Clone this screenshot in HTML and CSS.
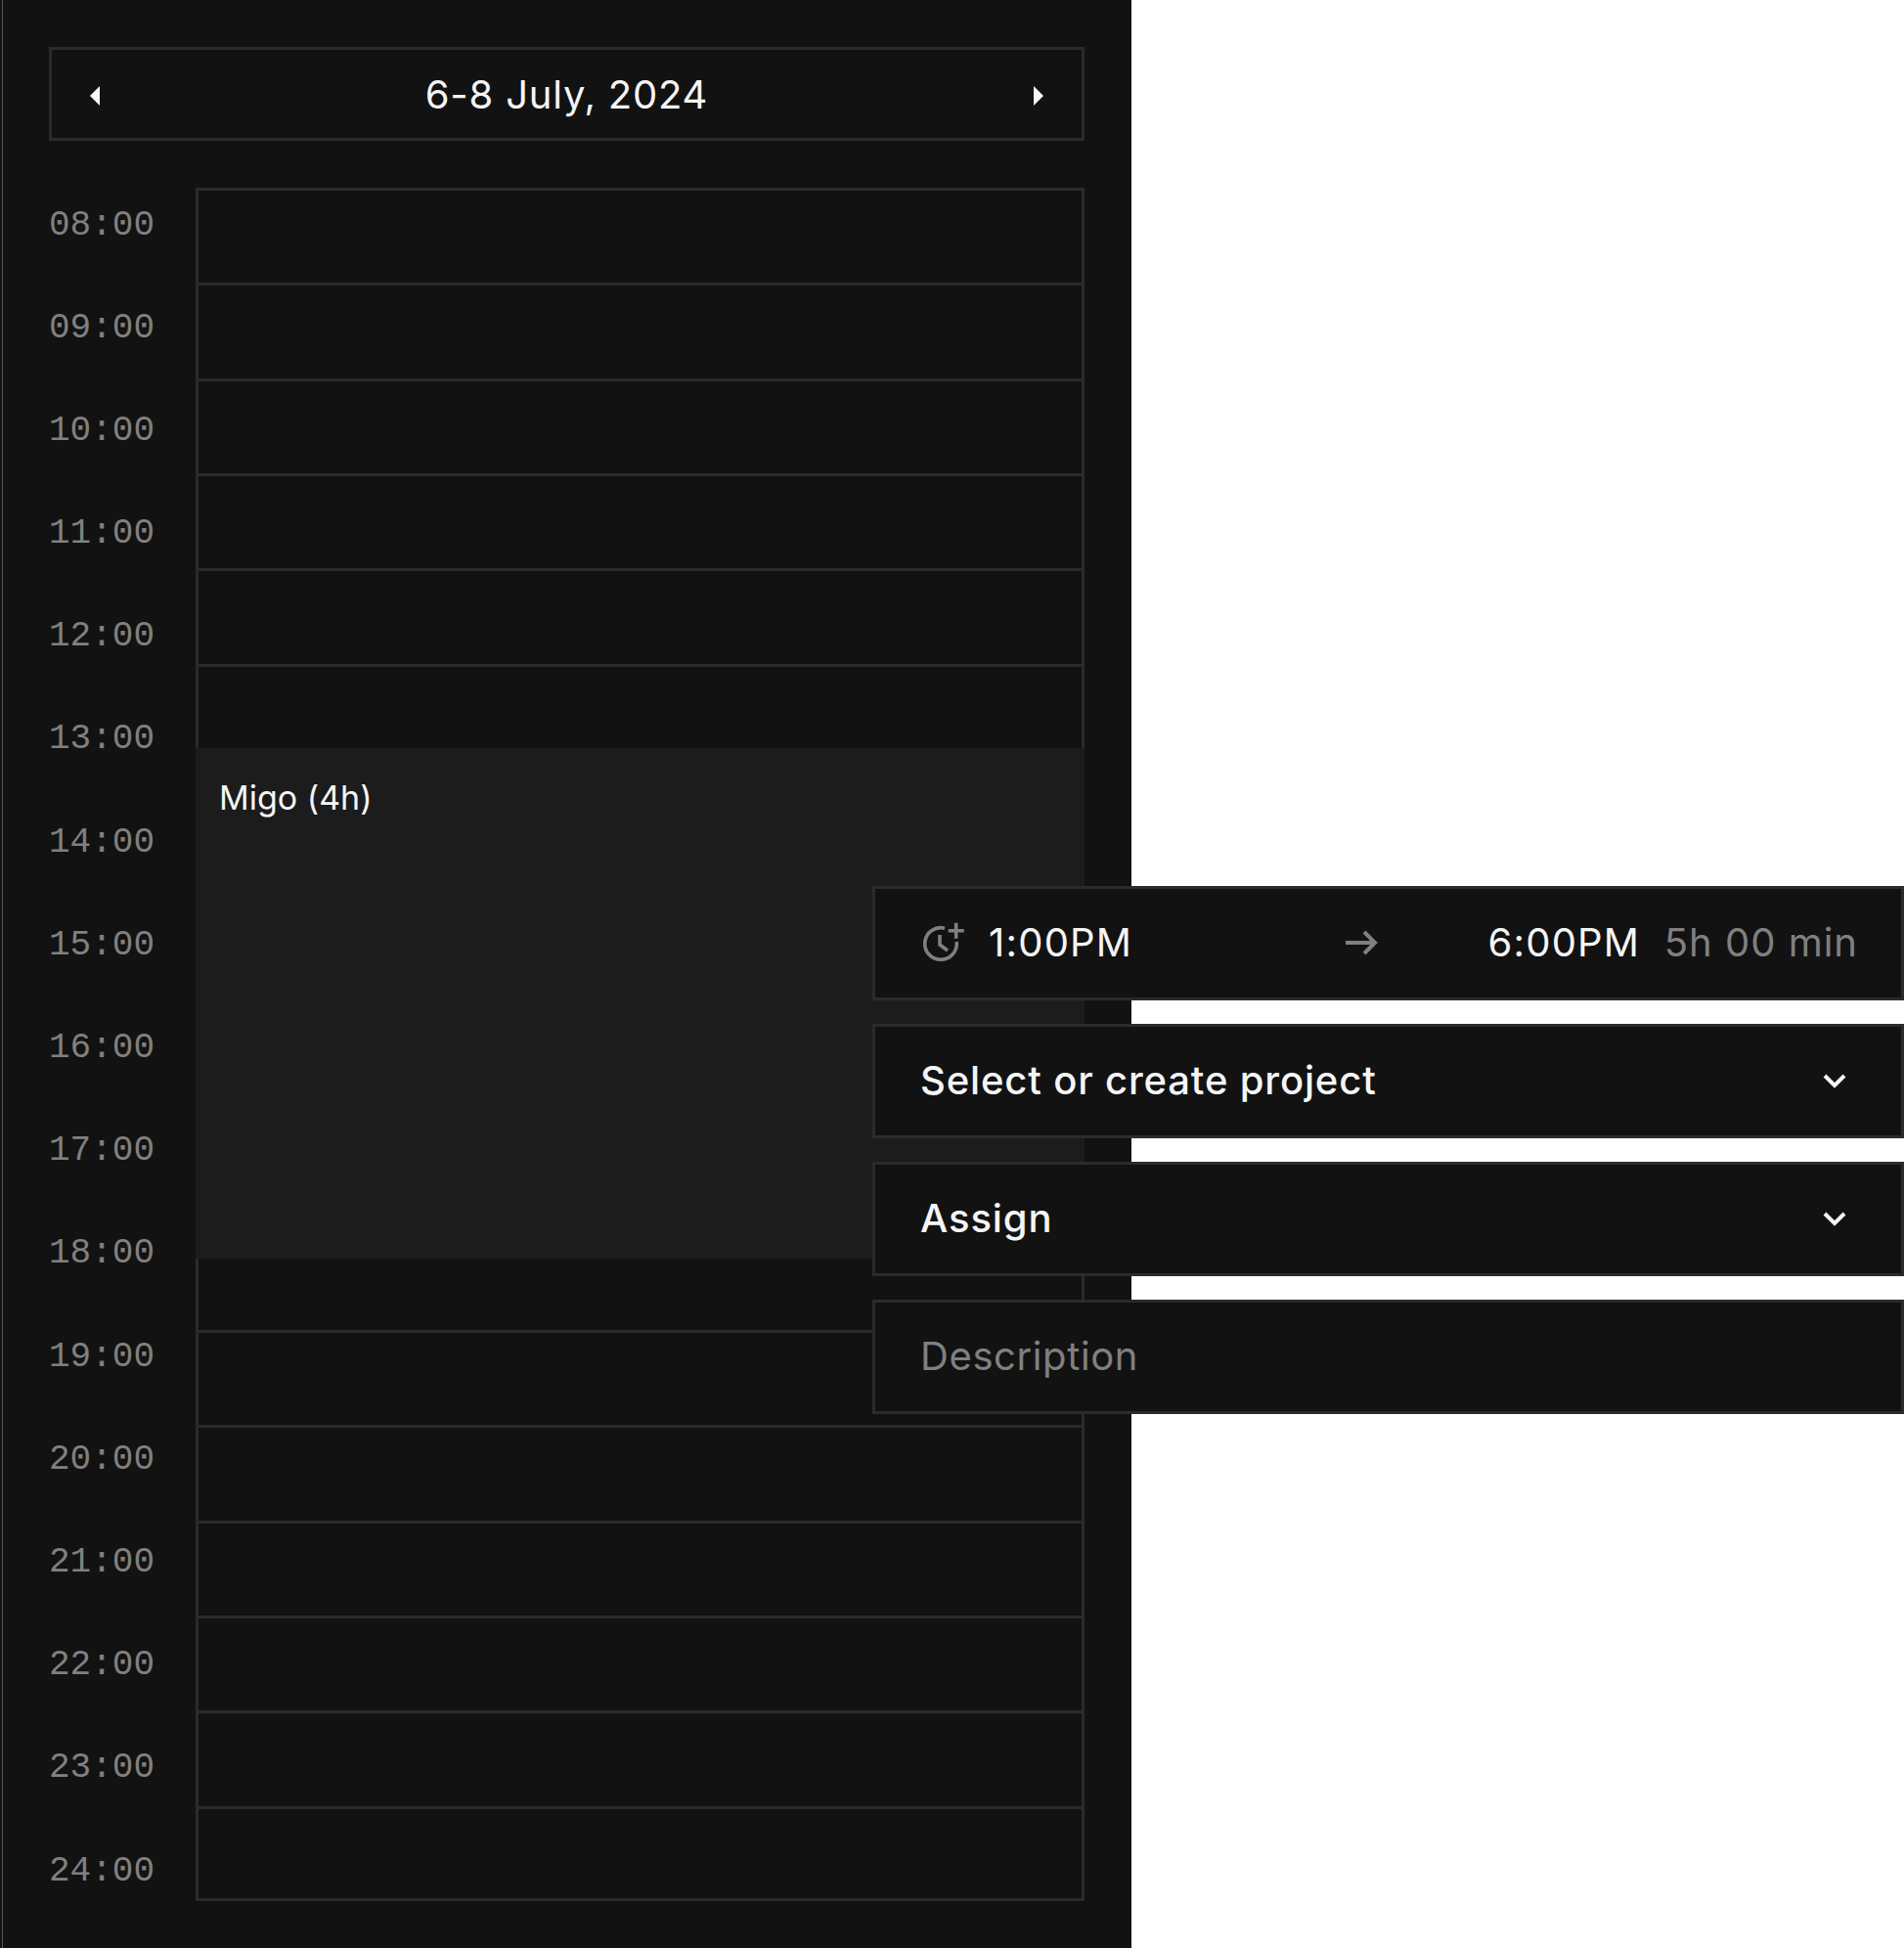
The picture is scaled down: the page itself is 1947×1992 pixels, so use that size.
FILE: index.html
```html
<!DOCTYPE html>
<html lang="en">
<head>
<meta charset="utf-8">
<title>Calendar</title>
<link rel="stylesheet" href="styles.css">
</head>
<body>
<div class="frame">
<main class="panel">
  <header class="datebar">
    <svg class="tri" width="12" height="20" viewBox="0 0 12 20"><path d="M11 0V20L1 10Z" fill="#f5f5f5"/></svg>
    <h1 class="datebar-title">6-8 July, 2024</h1>
    <svg class="tri" width="12" height="20" viewBox="0 0 12 20"><path d="M1 0V20L11 10Z" fill="#f5f5f5"/></svg>
  </header>
  <section class="schedule">
    <div class="hours">
      <span>08:00</span><span>09:00</span><span>10:00</span><span>11:00</span><span>12:00</span><span>13:00</span><span>14:00</span><span>15:00</span><span>16:00</span><span>17:00</span><span>18:00</span><span>19:00</span><span>20:00</span><span>21:00</span><span>22:00</span><span>23:00</span><span>24:00</span>
    </div>
    <div class="grid">
      <div class="slot"></div><div class="slot"></div><div class="slot"></div><div class="slot"></div><div class="slot"></div><div class="slot"></div><div class="slot"></div><div class="slot"></div><div class="slot"></div><div class="slot"></div><div class="slot"></div><div class="slot"></div><div class="slot"></div><div class="slot"></div><div class="slot"></div><div class="slot"></div><div class="slot"></div><div class="slot slot-last"></div>
      <div class="event">Migo (4h)</div>
    </div>
  </section>
</main>
</div>
<form class="entry">
  <div class="field">
    <svg class="clock" width="44" height="42" viewBox="0 0 44 42" fill="none" stroke="#808080" stroke-width="3.6"><path d="M22 6.2A16.3 16.3 0 1 0 34.2 20"/><path d="M17 13V23L25 29"/><path d="M33.7 .7V16.7M25.7 8.7H41.7"/></svg>
    <span class="time">1:00PM</span>
    <svg class="arrow" width="34" height="28" viewBox="0 0 34 28" fill="none" stroke="#808080" stroke-width="4"><path d="M0 14H30M19 3L30 14L19 25"/></svg>
    <span class="time time-end">6:00PM</span>
    <span class="muted muted-duration">5h 00 min</span>
  </div>
  <div class="field field-select">
    <span class="label">Select or create project</span>
    <svg class="chev" width="24" height="16" viewBox="0 0 24 16" fill="none" stroke="#f5f5f5" stroke-width="4"><path d="M2 3L12 13L22 3"/></svg>
  </div>
  <div class="field field-select">
    <span class="label">Assign</span>
    <svg class="chev" width="24" height="16" viewBox="0 0 24 16" fill="none" stroke="#f5f5f5" stroke-width="4"><path d="M2 3L12 13L22 3"/></svg>
  </div>
  <div class="field">
    <span class="muted muted-placeholder">Description</span>
  </div>
</form>
</body>
</html>
```
FILE: styles.css
```css
* { box-sizing: border-box; }
html, body { margin: 0; background: #fff; }
body {
  position: relative;
  width: 1947px;
  height: 1992px;
  overflow: hidden;
  font-family: Inter, "Liberation Sans", sans-serif;
  color: #f5f5f5;
}
.frame {
  width: 1157px;
  height: 1992px;
  padding-left: 2px;
  background: #121212;
}
.panel {
  height: 100%;
  border-left: 1px solid #5a5a5a;
  padding: 48px 48px 0 47px;
}
.datebar {
  height: 96px;
  border: 3px solid #2b2b2b;
  display: flex;
  align-items: center;
  justify-content: space-between;
  padding: 0 38px;
}
.tri { margin-top: 3px; }
.datebar-title {
  margin: 0;
  font-size: 40px;
  font-weight: 400;
  letter-spacing: .8px;
}
.schedule {
  display: flex;
  margin-top: 48px;
}
.hours {
  width: 150px;
  padding-top: 17.5px;
  display: flex;
  flex-direction: column;
  gap: 63.2px;
  font-family: "Liberation Mono", monospace;
  font-size: 36px;
  line-height: 42px;
  color: #808080;
}
.grid {
  position: relative;
  width: 909px;
  border-top: 3px solid #2b2b2b;
  border-left: 3px solid #2b2b2b;
  border-right: 3px solid #2b2b2b;
}
.slot {
  height: 97.33px;
  border-bottom: 3px solid #2b2b2b;
}
.slot-last { height: 94px; }
.event {
  position: absolute;
  left: -3px;
  right: -3px;
  top: 570px;
  height: 522px;
  background: #1c1c1c;
  padding: 31px 24px;
  font-size: 34px;
  line-height: 40px;
}
.entry {
  position: absolute;
  left: 892px;
  top: 906px;
  width: 1055px;
  display: flex;
  flex-direction: column;
  gap: 24px;
}
.field {
  height: 117px;
  background: #121212;
  border: 3px solid #2b2b2b;
  display: flex;
  align-items: center;
  padding: 0 44px 2px 46px;
  font-size: 40px;
}
.field-select { justify-content: space-between; padding-right: 56px; }
.label { font-weight: 500; letter-spacing: .85px; }
.clock { margin-left: 3px; margin-right: 23px; }
.time { letter-spacing: 1.2px; }
.time-end { margin-left: auto; }
.arrow { margin-left: 218px; }
.muted { color: #808080; }
.muted-duration { margin-left: 24.5px; letter-spacing: 1px; }
.muted-placeholder { letter-spacing: .6px; }
```
